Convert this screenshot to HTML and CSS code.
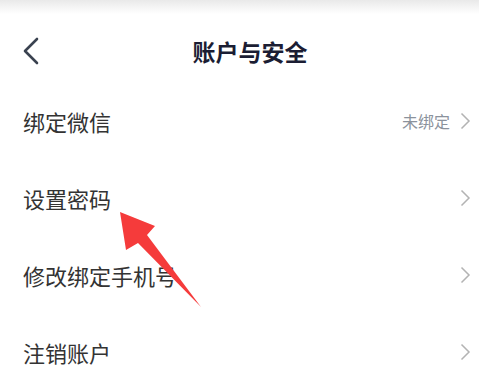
FILE: index.html
```html
<!DOCTYPE html>
<html lang="zh">

<head>
    <meta charset="UTF-8">
    <meta name="viewport" content="width=device-width, initial-scale=1.0">
    <title>账户与安全</title>
    <link rel="stylesheet" href="styles.css">
</head>

<body>

    <div class="status-bar"></div>

    <div class="cabecalho">
        <svg class="voltar" width="18" height="28" viewBox="0 0 18 28">
            <path d="M15 2 L3 14 L15 26" fill="none" stroke="#3a4250" stroke-width="2.6" stroke-linecap="round" stroke-linejoin="round" />
        </svg>
        <div class="titulo">账户与安全</div>
    </div>

    <div class="lista">
        <div class="linha">
            <span class="rotulo">绑定微信</span>
            <span class="valor">未绑定</span>
            <svg class="seta" width="11" height="18" viewBox="0 0 11 18">
                <path d="M1.5 1.5 L9 9 L1.5 16.5" fill="none" stroke="#b3b3b3" stroke-width="1.5" />
            </svg>
        </div>
        <div class="linha">
            <span class="rotulo">设置密码</span>
            <svg class="seta" width="11" height="18" viewBox="0 0 11 18">
                <path d="M1.5 1.5 L9 9 L1.5 16.5" fill="none" stroke="#b3b3b3" stroke-width="1.5" />
            </svg>
        </div>
        <div class="linha">
            <span class="rotulo">修改绑定手机号</span>
            <svg class="seta" width="11" height="18" viewBox="0 0 11 18">
                <path d="M1.5 1.5 L9 9 L1.5 16.5" fill="none" stroke="#b3b3b3" stroke-width="1.5" />
            </svg>
        </div>
        <div class="linha">
            <span class="rotulo">注销账户</span>
            <svg class="seta" width="11" height="18" viewBox="0 0 11 18">
                <path d="M1.5 1.5 L9 9 L1.5 16.5" fill="none" stroke="#b3b3b3" stroke-width="1.5" />
            </svg>
        </div>
    </div>

    <!-- seta vermelha por cima da lista -->
    <svg class="destaque" width="479" height="375" viewBox="0 0 479 375">
        <polygon points="120,212 155,226 147,235 201,307 138,243 126,250" fill="#f53b3b" />
    </svg>

</body>

</html>
```

FILE: styles.css
```css
body {
    margin: 0;
    width: 479px;
    height: 375px;
    overflow: hidden;
    position: relative;
    background-color: #ffffff;
    font-family: "Noto Sans CJK SC", "Noto Sans", sans-serif;
}

.status-bar {
    height: 14px;
    background: linear-gradient(#e9e9e9, #ffffff);
}

.cabecalho {
    height: 52px;
    padding-top: 11px;
    display: flex;
    align-items: center;
    position: relative;
}

.voltar {
    margin-left: 22px;
}

.titulo {
    position: absolute;
    left: 0;
    right: 0;
    padding-left: 21px;
    text-align: center;
    font-size: 23px;
    font-weight: bold;
    color: #1b1d33;
    pointer-events: none;
}

.lista {
    display: flex;
    flex-direction: column;
    margin-top: 5px;
}

.linha {
    height: 77px;
    flex-shrink: 0;
    display: flex;
    align-items: center;
    padding: 0 8px 0 23px;
}

.rotulo {
    flex: 1;
    font-size: 22px;
    color: #333333;
}

.valor {
    font-size: 16px;
    color: #8b929c;
    margin-right: 10px;
}

.destaque {
    position: absolute;
    left: 0;
    top: 0;
}
```
